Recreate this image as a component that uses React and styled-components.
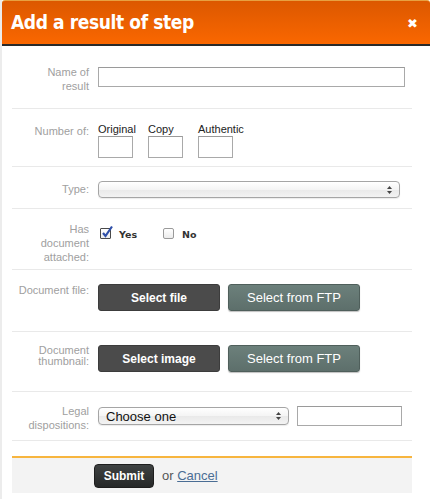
import React from "react"
import styled, { createGlobalStyle } from "styled-components"

const GlobalStyle = createGlobalStyle`
    html, body {
        margin: 0;
        padding: 0;
        background: #fff;
    }
    body {
        font-family: "Liberation Sans", Arial, sans-serif;
    }
`

const Page = styled.div`
    display: flex;
    min-height: 499px;
    background: #ececec;
    padding-left: 2px;
`
const Modal = styled.div`
    flex: 1;
    display: flex;
    flex-direction: column;
    background: #fff;
`
const Header = styled.div`
    box-sizing: border-box;
    display: flex;
    align-items: center;
    justify-content: space-between;
    height: 46px;
    padding: 0 12px 1px 9px;
    background: linear-gradient(to bottom, #dc5800 0%, #fa6700 100%);
    border-top: 1px solid #e8a040;
    border-bottom: 2px solid #2a2a2a;
    border-radius: 3px 3px 0 0;
    margin-right: 1px;
`
const Title = styled.h1`
    margin: 0;
    font-family: "DejaVu Sans Condensed", "DejaVu Sans", sans-serif;
    font-weight: bold;
    font-size: 19px;
    letter-spacing: -0.4px;
    color: #fff;
`
const Close = styled.span`
    color: #fff;
    font-family: "DejaVu Sans", sans-serif;
    font-weight: bold;
    font-size: 13px;
    margin-top: 3px;
`
const Body = styled.div`
    padding: 0 19px 0 10px;
`
const Row = styled.div`
    display: grid;
    grid-template-columns: 77px 1fr;
    align-items: start;
    column-gap: 9px;
    padding: ${p => p.$pad};
    border-bottom: 1px solid #e9e9e9;
`
const Label = styled.div`
    text-align: right;
    font-size: 11px;
    line-height: ${p => p.$tight ? "11px" : "14px"};
    color: #a0a0a0;
    margin-top: ${p => p.$top || "0px"};
`
const Field = styled.div`
    display: flex;
    margin-top: ${p => p.$top || "0px"};
`
const TextInput = styled.input`
    box-sizing: border-box;
    display: block;
    width: ${p => p.$w};
    height: ${p => p.$h || "20px"};
    border: 1px solid #a9a9a9;
    border-top-color: #9a9a9a;
    background: #fff;
    padding: 0 4px;
    margin: 0;
    font-size: 12px;
    outline: none;
`
const Counts = styled.div`
    display: flex;
    gap: 15px;
`
const Count = styled.label`
    display: flex;
    flex-direction: column;
    width: 35px;
    white-space: nowrap;
    font-size: 11px;
    line-height: 13px;
    color: #222;
`
const SelectBox = styled.div`
    box-sizing: border-box;
    position: relative;
    display: flex;
    align-items: center;
    width: ${p => p.$w};
    height: ${p => p.$h || "18px"};
    padding: 0 20px 0 7px;
    border: 1px solid #a5a5a5;
    border-radius: 4px;
    background: linear-gradient(to bottom, #ffffff 0%, #f4f4f4 50%, #e9e9e9 51%, #f3f3f3 100%);
    box-shadow: 0 1px 1px rgba(0, 0, 0, 0.08);
    font-size: 13px;
    color: #111;
`
const Arrows = styled.svg`
    position: absolute;
    right: 7px;
    top: 50%;
    transform: translateY(-50%);
`
const Choices = styled.div`
    display: flex;
    align-items: center;
    gap: 24px;
    padding-top: 6px;
    line-height: 14px;
`
const Choice = styled.label`
    display: flex;
    align-items: center;
    gap: 8px;
    font-family: "DejaVu Sans", sans-serif;
    font-size: 9.5px;
    font-weight: bold;
    color: #333;
`
const Box = styled.span`
    box-sizing: border-box;
    position: relative;
    width: 11px;
    height: 11px;
    margin-left: 2px;
    border: 1px solid ${p => p.$on ? "#4a4a4a" : "#9a9a9a"};
    border-radius: ${p => p.$on ? "1px" : "2px"};
    background: linear-gradient(to bottom, #fff, #ececec);
    margin-top: -3px;
`
const Tick = styled.svg`
    position: absolute;
    left: 0px;
    top: -4px;
`
const Buttons = styled.div`
    display: flex;
    gap: 8px;
`
const Button = styled.button`
    box-sizing: border-box;
    display: block;
    height: 27px;
    width: ${p => p.$w};
    border: 1px solid ${p => p.$ftp ? "#4f5f5b" : "#3c3c3c"};
    border-radius: 3px;
    background: ${p => p.$ftp
        ? "linear-gradient(to bottom, #6c807b, #5d6f6b)"
        : "#4b4b4b"};
    color: #fff;
    font-family: "Liberation Sans", Arial, sans-serif;
    font-size: ${p => p.$ftp ? "13px" : "12px"};
    font-weight: ${p => p.$ftp ? "normal" : "bold"};
    padding: 0;
    margin: 0;
    cursor: pointer;
    box-shadow: ${p => p.$ftp ? "0 1px 1px rgba(0,0,0,0.25)" : "none"};
`
const Legal = styled.div`
    display: flex;
    align-items: center;
    gap: 8px;
    margin-top: 2px;
`
const Footer = styled.div`
    margin: 15px 19px 0 10px;
    height: 35px;
    display: flex;
    align-items: center;
    gap: 8px;
    padding-left: 82px;
    background: #f3f3f3;
    border-top: 2px solid #f7b53f;
`
const Submit = styled.button`
    box-sizing: border-box;
    height: 24px;
    width: 60px;
    border: 1px solid #1e1e1e;
    border-radius: 4px;
    background: linear-gradient(to bottom, #3f4242, #262828);
    color: #fff;
    font-family: "Liberation Sans", Arial, sans-serif;
    font-weight: bold;
    font-size: 12px;
    padding: 0;
    margin-top: 1px;
`
const Or = styled.span`
    font-size: 13px;
    color: #555;
    a {
        color: #4a6d94;
        text-decoration: underline;
    }
`

const ArrowIcon = () => (
    <Arrows width="5" height="8" viewBox="0 0 5 8">
        <path d="M2.5 0 L5 3 L0 3 Z" fill="#444" />
        <path d="M2.5 8 L5 5 L0 5 Z" fill="#444" />
    </Arrows>
)

const Select = ({ w, h, children }) => (
    <SelectBox $w={w} $h={h}>
        {children}
        <ArrowIcon />
    </SelectBox>
)

const Check = ({ on, children }) => (
    <Choice>
        <Box $on={on}>
            {on && (
                <Tick width="13" height="13" viewBox="0 0 13 13">
                    <path d="M2 8 L4.5 11 L11 1.5" stroke="#2f4fa8" strokeWidth="2.2" fill="none" />
                </Tick>
            )}
        </Box>
        {children}
    </Choice>
)

export default function App() {
    return (
        <Page>
            <GlobalStyle />
            <Modal>
                <Header>
                    <Title>Add a result of step</Title>
                    <Close>&#x2716;</Close>
                </Header>
                <Body>
                    <Row $pad="19px 0 15px">
                        <Label>Name of<br />result</Label>
                        <Field $top="2px">
                            <TextInput $w="307px" />
                        </Field>
                    </Row>
                    <Row $pad="14px 0 8px">
                        <Label $top="1px">Number of:</Label>
                        <Counts>
                            <Count>Original<TextInput $w="35px" $h="22px" /></Count>
                            <Count>Copy<TextInput $w="35px" $h="22px" /></Count>
                            <Count>Authentic<TextInput $w="35px" $h="22px" /></Count>
                        </Counts>
                    </Row>
                    <Row $pad="14px 0 10px">
                        <Label $top="1px">Type:</Label>
                        <Field>
                            <Select w="302px" h="17px" />
                        </Field>
                    </Row>
                    <Row $pad="13px 0 5px">
                        <Label>Has<br />document<br />attached:</Label>
                        <Choices>
                            <Check on>Yes</Check>
                            <Check>No</Check>
                        </Choices>
                    </Row>
                    <Row $pad="14px 0 20px">
                        <Label $top="-1px">Document file:</Label>
                        <Buttons>
                            <Button $w="122px">Select file</Button>
                            <Button $w="132px" $ftp>Select from FTP</Button>
                        </Buttons>
                    </Row>
                    <Row $pad="13px 0 19px">
                        <Label $tight $top="0px">Document<br />thumbnail:</Label>
                        <Buttons>
                            <Button $w="122px">Select image</Button>
                            <Button $w="132px" $ftp>Select from FTP</Button>
                        </Buttons>
                    </Row>
                    <Row $pad="12px 0 8px">
                        <Label>Legal<br />dispositions:</Label>
                        <Legal>
                            <Select w="191px">Choose one</Select>
                            <TextInput $w="105px" />
                        </Legal>
                    </Row>
                </Body>
                <Footer>
                    <Submit>Submit</Submit>
                    <Or>or <a href="#">Cancel</a></Or>
                </Footer>
            </Modal>
        </Page>
    )
}
